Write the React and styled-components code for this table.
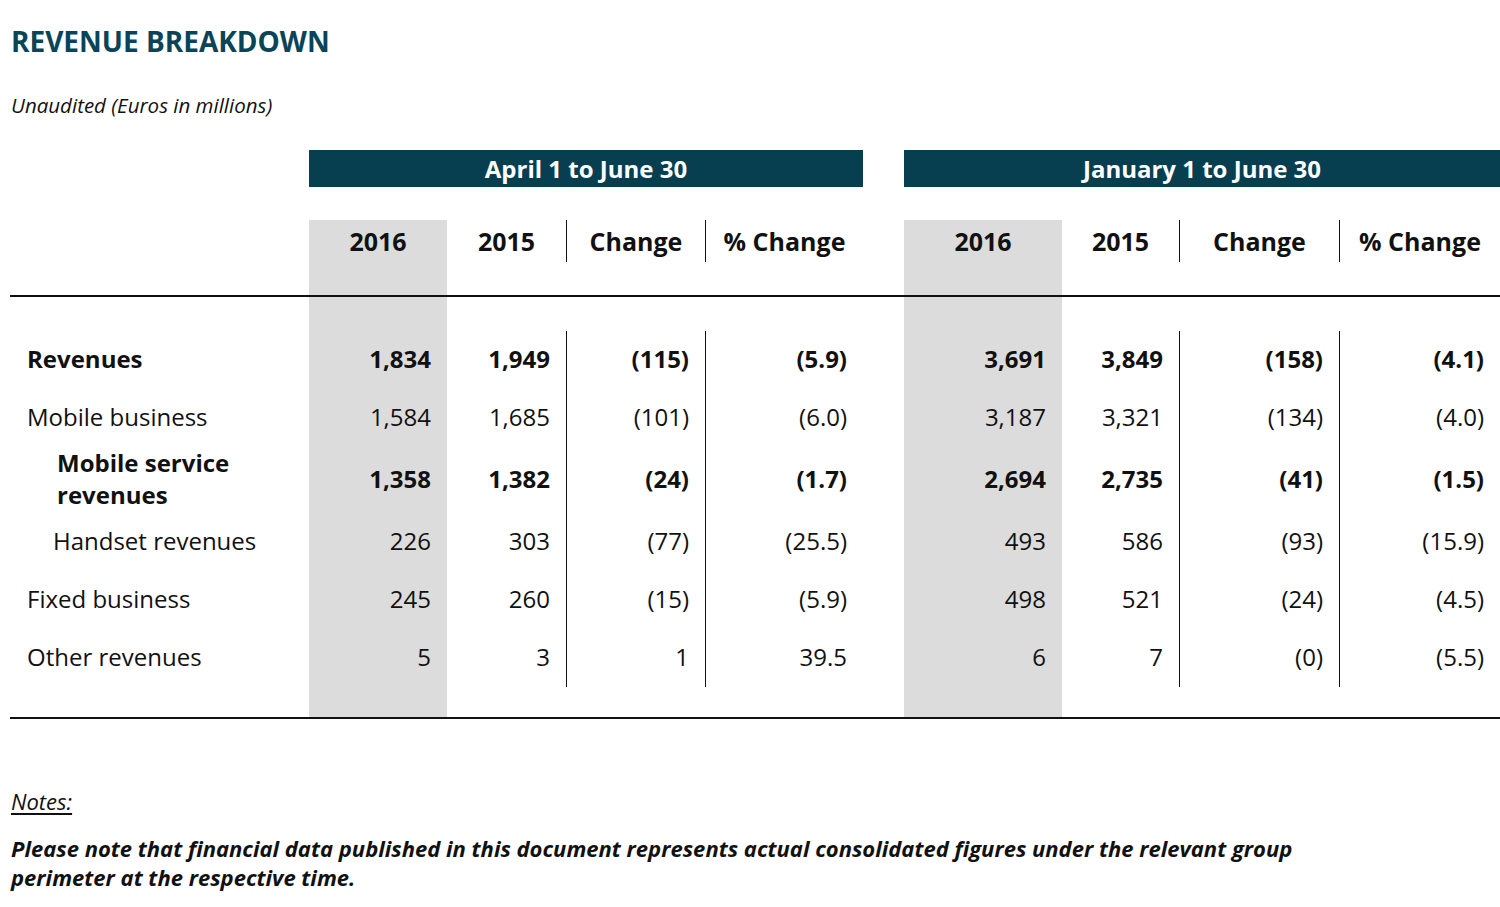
import React from "react";
import styled, { createGlobalStyle } from "styled-components";

const GlobalStyle = createGlobalStyle`
  html, body {
    margin: 0;
    padding: 0;
    background: #fff;
  }
  body {
    font-family: "Open Sans", "Noto Sans", sans-serif;
    color: #111;
  }
`;

// label | 2016 | 2015 | Change | % Change | gap | 2016 | 2015 | Change | % Change
const COLS = "299px 138px 119px 139px 158px 41px 158px 117px 160px 161px";
const SHADE = "#dcdcdc";
const TEAL = "#073f51";

const Page = styled.div`
  width: 1500px;
  padding-top: 24px;
`;

const Title = styled.h1`
  margin: 0 0 0 11px;
  font-size: 28px;
  line-height: 34px;
  font-weight: 700;
  color: #0a4458;
`;

const Subtitle = styled.p`
  margin: 34px 0 0 11px;
  font-size: 20.5px;
  line-height: 26px;
  font-style: italic;
`;

const Table = styled.div`
  margin: 32px 0 0 10px;
`;

const Row = styled.div`
  display: grid;
  grid-template-columns: ${COLS};
  min-height: ${(p) => p.$h || 58}px;
  margin-top: ${(p) => p.$mt || 0}px;
  border-bottom: ${(p) => (p.$rule ? "2px solid #111" : "none")};
`;

const Banner = styled.div`
  grid-column: ${(p) => p.$start} / span 4;
  background: ${TEAL};
  color: #fff;
  font-size: 24px;
  font-weight: 700;
  display: flex;
  align-items: center;
  justify-content: center;
  padding-bottom: 1px;
`;

const Cell = styled.div`
  background: ${(p) => (p.$shade ? SHADE : "transparent")};
  border-left: ${(p) => (p.$sep ? "1.5px solid #111" : "none")};
`;

const HeadLabel = styled.div`
  height: 42px;
  display: flex;
  align-items: center;
  justify-content: center;
  font-size: 25px;
  font-weight: 700;
  border-left: ${(p) => (p.$sep ? "1.5px solid #111" : "none")};
`;

const Num = styled(Cell)`
  display: flex;
  align-items: center;
  justify-content: flex-end;
  padding-right: 16px;
  padding-bottom: 3px;
  font-size: 24px;
  font-weight: ${(p) => (p.$bold ? 700 : 400)};
`;

const Label = styled.div`
  display: flex;
  align-items: center;
  padding-left: ${(p) => p.$indent || 17}px;
  padding-right: 40px;
  padding-bottom: 3px;
  font-size: 24px;
  line-height: 31.5px;
  font-weight: ${(p) => (p.$bold ? 700 : 400)};
`;

const Notes = styled.div`
  margin: 68px 0 0 11px;
`;

const NotesHead = styled.p`
  margin: 0;
  font-size: 22px;
  line-height: 28px;
  font-style: italic;
  text-decoration: underline;
  text-underline-offset: 3px;
`;

const NotesText = styled.p`
  margin: 19px 0 0;
  width: 1380px;
  font-size: 22px;
  line-height: 29px;
  font-style: italic;
  font-weight: 700;
`;

const shadeAt = (i) => i === 0 || i === 4;
const sepAt = (i) => i === 2 || i === 3 || i === 6 || i === 7;
const heads = ["2016", "2015", "Change", "% Change"];

const rows = [
  { label: "Revenues", bold: true, vals: ["1,834", "1,949", "(115)", "(5.9)", "3,691", "3,849", "(158)", "(4.1)"] },
  { label: "Mobile business", vals: ["1,584", "1,685", "(101)", "(6.0)", "3,187", "3,321", "(134)", "(4.0)"] },
  { label: "Mobile service revenues", bold: true, indent: 47, h: 66, vals: ["1,358", "1,382", "(24)", "(1.7)", "2,694", "2,735", "(41)", "(1.5)"] },
  { label: "Handset revenues", indent: 43, vals: ["226", "303", "(77)", "(25.5)", "493", "586", "(93)", "(15.9)"] },
  { label: "Fixed business", vals: ["245", "260", "(15)", "(5.9)", "498", "521", "(24)", "(4.5)"] },
  { label: "Other revenues", vals: ["5", "3", "1", "39.5", "6", "7", "(0)", "(5.5)"] },
];

function withGap(cells) {
  // insert the spacer column between the two periods
  return [...cells.slice(0, 4), <div key="gap" />, ...cells.slice(4)];
}

function PadRow({ h, rule }) {
  const cells = [0, 1, 2, 3, 4, 5, 6, 7].map((i) => <Cell key={i} $shade={shadeAt(i)} />);
  return (
    <Row $h={h} $rule={rule}>
      <div />
      {withGap(cells)}
    </Row>
  );
}

export default function App() {
  return (
    <>
      <GlobalStyle />
      <Page>
        <Title>REVENUE BREAKDOWN</Title>
        <Subtitle>Unaudited (Euros in millions)</Subtitle>

        <Table>
          <Row $h={37}>
            <Banner $start={2}>April 1 to June 30</Banner>
            <Banner $start={7}>January 1 to June 30</Banner>
          </Row>

          <Row $h={75} $mt={33} $rule>
            <div />
            {withGap(
              [...heads, ...heads].map((t, i) => (
                <Cell key={i} $shade={shadeAt(i)}>
                  <HeadLabel $sep={sepAt(i)}>{t}</HeadLabel>
                </Cell>
              ))
            )}
          </Row>

          <PadRow h={34} />

          {rows.map((r) => (
            <Row key={r.label} $h={r.h || 58}>
              <Label $bold={r.bold} $indent={r.indent}>{r.label}</Label>
              {withGap(
                r.vals.map((v, i) => (
                  <Num key={i} $shade={shadeAt(i)} $sep={sepAt(i)} $bold={r.bold}>
                    {v}
                  </Num>
                ))
              )}
            </Row>
          ))}

          <PadRow h={30} rule />
        </Table>

        <Notes>
          <NotesHead>Notes:</NotesHead>
          <NotesText>
            Please note that financial data published in this document represents actual consolidated figures under the relevant group perimeter at the respective time.
          </NotesText>
        </Notes>
      </Page>
    </>
  );
}
